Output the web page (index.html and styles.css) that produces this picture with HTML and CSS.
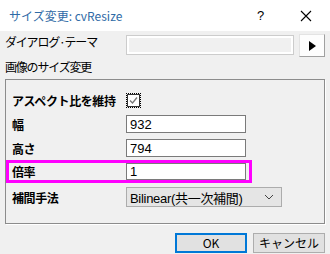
FILE: index.html
```html
<!DOCTYPE html>
<html lang="ja">
  <head>
    <meta charset="UTF-8" />
    <title>サイズ変更: cvResize</title>
    <link rel="stylesheet" href="styles.css">
  </head>
  <body>
    <div class="dialog">
      <div class="titlebar">
        <span class="title">サイズ変更: cvResize</span>
        <span class="caption-btn help">?</span>
        <span class="caption-btn close">
          <svg width="12" height="12" viewBox="0 0 12 12">
            <path d="M1 1 L11 11 M11 1 L1 11" stroke="#000" stroke-width="1.1" fill="none" />
          </svg>
        </span>
      </div>

      <div class="content">
        <div class="theme-row">
          <span class="label">ダイアログ·テーマ</span>
          <div class="theme-field"></div>
          <button class="theme-btn">
            <svg width="8" height="10" viewBox="0 0 8 10">
              <path d="M1 0 L8 5 L1 10 Z" fill="#000" />
            </svg>
          </button>
        </div>

        <div class="group-title">画像のサイズ変更</div>

        <div class="group">
          <div class="row check-row">
            <span class="field-label">アスペクト比を維持</span>
            <span class="checkbox">
              <svg width="13" height="13" viewBox="0 0 13 13">
                <rect x="0.5" y="0.5" width="12" height="12" fill="#fff" stroke="#333" />
                <path d="M3 6.5 L5.5 9 L10 3.5" stroke="#777" stroke-width="1.3" fill="none" />
              </svg>
            </span>
          </div>
          <div class="row">
            <span class="field-label">幅</span>
            <input class="text-input" type="text" value="932" />
          </div>
          <div class="row">
            <span class="field-label">高さ</span>
            <input class="text-input" type="text" value="794" />
          </div>
          <div class="row highlight">
            <span class="field-label">倍率</span>
            <input class="text-input" type="text" value="1" />
          </div>
          <div class="row">
            <span class="field-label">補間手法</span>
            <div class="select">
              <span>Bilinear(共一次補間)</span>
              <svg width="10" height="6" viewBox="0 0 10 6">
                <path d="M1 1 L5 5 L9 1" stroke="#444" stroke-width="1" fill="none" />
              </svg>
            </div>
          </div>
        </div>

        <div class="buttons">
          <button class="btn default">OK</button>
          <button class="btn">キャンセル</button>
        </div>
      </div>
    </div>
  </body>
</html>
```

FILE: styles.css
```css
body {
  margin: 0;
  font-family: "Noto Sans CJK JP", "Noto Sans", sans-serif;
  font-size: 12px;
  background-color: #f0f0f0;
}
.dialog {
  width: 330px;
  height: 254px;
  overflow: hidden;
  background-color: #f0f0f0;
}
.titlebar {
  height: 31px;
  background-color: #fff;
  display: flex;
  align-items: center;
  padding-left: 9px;
  padding-right: 2px;
}
.title {
  color: #2f6aa6;
  font-size: 12px;
  flex: 1;
}
.caption-btn {
  width: 45px;
  height: 31px;
  display: flex;
  align-items: center;
  justify-content: center;
}
.help {
  font-family: "Liberation Sans", sans-serif;
  font-size: 13px;
}
.content {
  padding: 0 5px;
}
.theme-row {
  display: flex;
  margin-top: 3px;
  height: 23px;
}
.theme-row .label {
  letter-spacing: -1.2px;
  line-height: 14px;
  margin-top: 1px;
}
.theme-field {
  margin-left: auto;
  margin-top: 1px;
  width: 166px;
  height: 18px;
  border: 1px solid #cccccc;
  background-color: #f0f0f0;
  box-shadow: inset 0 0 0 2px #fff;
}
.theme-btn {
  margin-left: 5px;
  width: 26px;
  height: 23px;
  padding: 0;
  background-color: #fdfdfd;
  border: 1px solid #e3e3e3;
  border-right-color: #a0a0a0;
  border-bottom-color: #a0a0a0;
  display: flex;
  align-items: center;
  justify-content: center;
}
.group-title {
  letter-spacing: -1.2px;
  line-height: 14px;
  margin-top: 3px;
}
.group {
  box-sizing: border-box;
  margin-top: 5px;
  height: 145px;
  border: 1px solid #8c8c8c;
  box-shadow: 1px 1px 0 #fff;
  padding-top: 12px;
  display: flex;
  flex-direction: column;
}
.row {
  display: flex;
  align-items: center;
  padding-left: 6px;
  margin-bottom: 6px;
}
.field-label {
  width: 114px;
  font-weight: bold;
  font-size: 12px;
  letter-spacing: -0.4px;
}
.check-row {
  height: 16px;
  margin-bottom: 7px;
}
.checkbox {
  display: flex;
  padding: 1px;
  outline: 1px dotted #000;
  outline-offset: -1px;
}
.text-input {
  box-sizing: border-box;
  width: 120px;
  height: 18px;
  border: 1px solid #7a7a7a;
  padding: 0 3px;
  font-family: "Liberation Sans", sans-serif;
  font-size: 13px;
  background-color: #fff;
  margin: 0;
}
.highlight {
  width: 237px;
  height: 17px;
  border: 3px solid #ff00ff;
  padding-left: 3px;
  margin-top: -3px;
  margin-bottom: 4px;
}
.highlight .text-input {
  height: 17px;
}
.select {
  box-sizing: border-box;
  width: 156px;
  height: 20px;
  border: 1px solid #acacac;
  background-color: #e5e5e5;
  display: flex;
  align-items: center;
  justify-content: space-between;
  padding: 0 7px 0 3px;
  font-family: "Liberation Sans", "Noto Sans CJK JP", sans-serif;
  font-size: 13px;
  letter-spacing: -0.3px;
}
.buttons {
  display: flex;
  justify-content: flex-end;
  gap: 6px;
  margin-top: 9px;
}
.btn {
  box-sizing: border-box;
  width: 72px;
  height: 20px;
  background-color: #e1e1e1;
  border: 1px solid #adadad;
  font-family: "Noto Sans CJK JP", sans-serif;
  font-size: 12px;
  padding: 0;
  line-height: 16px;
}
.btn.default {
  border: 2px solid #0078d7;
}
```
